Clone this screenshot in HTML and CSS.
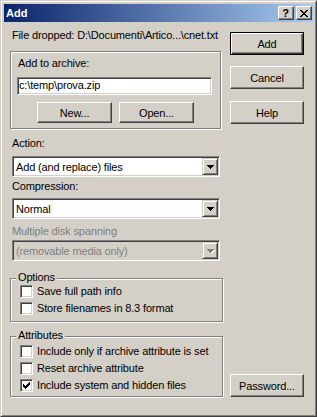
FILE: index.html
```html
<!DOCTYPE html>
<html lang="en">
<head>
    <meta charset="UTF-8">
    <title>Add</title>
    <link rel="stylesheet" href="styles.css">
</head>
<body>
    <div class="window">
        <div class="titlebar">
            <span class="title">Add</span>
            <div class="caption-buttons">
                <span class="cap-btn help">?</span>
                <span class="cap-btn close">
                    <svg width="8" height="7" viewBox="0 0 8 7" shape-rendering="crispEdges">
                        <path d="M0 0h2v1h-2zM6 0h2v1h-2zM1 1h2v1h-2zM5 1h2v1h-2zM2 2h4v1h-4zM3 3h2v1h-2zM2 4h4v1h-4zM1 5h2v1h-2zM5 5h2v1h-2zM0 6h2v1h-2zM6 6h2v1h-2z" fill="#000"/>
                    </svg>
                </span>
            </div>
        </div>

        <div class="client">
            <div class="left">
                <p class="dropped">File dropped: D:\Documenti\Artico...\cnet.txt</p>

                <div class="archive-box">
                    <p class="box-label">Add to archive:</p>
                    <div class="textbox">c:\temp\prova.zip</div>
                    <div class="archive-buttons">
                        <button class="btn">New...</button>
                        <button class="btn">Open...</button>
                    </div>
                </div>

                <p class="field-label action-label">Action:</p>
                <div class="combo">
                    <span class="combo-text">Add (and replace) files</span>
                    <span class="combo-arrow">
                        <svg width="7" height="4" viewBox="0 0 7 4" shape-rendering="crispEdges"><path d="M0 0h7v1h-7zM1 1h5v1h-5zM2 2h3v1h-3zM3 3h1v1h-1z" fill="#000"/></svg>
                    </span>
                </div>

                <p class="field-label">Compression:</p>
                <div class="combo">
                    <span class="combo-text">Normal</span>
                    <span class="combo-arrow">
                        <svg width="7" height="4" viewBox="0 0 7 4" shape-rendering="crispEdges"><path d="M0 0h7v1h-7zM1 1h5v1h-5zM2 2h3v1h-3zM3 3h1v1h-1z" fill="#000"/></svg>
                    </span>
                </div>

                <p class="field-label disabled span-label">Multiple disk spanning</p>
                <div class="combo combo-disabled">
                    <span class="combo-text">(removable media only)</span>
                    <span class="combo-arrow">
                        <svg width="8" height="5" viewBox="0 0 8 5" shape-rendering="crispEdges"><path d="M1 1h7v1h-7zM2 2h5v1h-5zM3 3h3v1h-3zM4 4h1v1h-1z" fill="#fff"/><path d="M0 0h7v1h-7zM1 1h5v1h-5zM2 2h3v1h-3zM3 3h1v1h-1z" fill="#808080"/></svg>
                    </span>
                </div>

                <div class="group options">
                    <span class="legend">Options</span>
                    <label class="check"><span class="box"></span>Save full path info</label>
                    <label class="check"><span class="box"></span>Store filenames in 8.3 format</label>
                </div>

                <div class="group attributes">
                    <span class="legend">Attributes</span>
                    <label class="check"><span class="box"></span>Include only if archive attribute is set</label>
                    <label class="check"><span class="box"></span>Reset archive attribute</label>
                    <label class="check"><span class="box">
                        <svg width="7" height="7" viewBox="0 0 7 7" shape-rendering="crispEdges"><path d="M6 0h1v3h-1zM5 1h1v3h-1zM4 2h1v3h-1zM3 3h1v3h-1zM2 4h1v3h-1zM1 3h1v3h-1zM0 2h1v3h-1z" fill="#000"/></svg>
                    </span>Include system and hidden files</label>
                </div>
            </div>

            <div class="right">
                <button class="btn side default">Add</button>
                <button class="btn side cancel">Cancel</button>
                <button class="btn side help-btn">Help</button>
                <button class="btn side password">Password...</button>
            </div>
        </div>
    </div>
</body>
</html>
```

FILE: styles.css
```css
* {
    box-sizing: border-box;
}

body {
    margin: 0;
    background: #d4d0c8;
    font-family: "Liberation Sans", Arial, sans-serif;
    font-size: 11px;
    letter-spacing: -0.15px;
    color: #000;
}

p {
    margin: 0;
    line-height: 13px;
}

.window {
    width: 317px;
    height: 417px;
    display: flex;
    flex-direction: column;
    padding: 3px;
    background: #d4d0c8;
    border: 1px solid;
    border-color: #d4d0c8 #404040 #404040 #d4d0c8;
    box-shadow: inset 1px 1px #fff, inset -1px -1px #808080;
}

/* title bar */
.titlebar {
    height: 18px;
    display: flex;
    align-items: center;
    padding-left: 2px;
    background: linear-gradient(to right, #0a246a, #a6caf0);
}

.title {
    color: #fff;
    font-weight: bold;
    font-size: 11px;
    letter-spacing: 0;
}

.caption-buttons {
    margin-left: auto;
    margin-right: 1px;
    display: flex;
    gap: 2px;
}

.cap-btn {
    width: 16px;
    height: 14px;
    display: flex;
    align-items: center;
    justify-content: center;
    background: #d4d0c8;
    border: 1px solid;
    border-color: #fff #404040 #404040 #fff;
    box-shadow: inset -1px -1px #808080;
}

.cap-btn.help {
    font-weight: bold;
    font-size: 11px;
    line-height: 12px;
    padding-right: 1px;
}

.cap-btn.close svg {
    margin-right: 1px;
}

/* client area */
.client {
    flex: 1;
    display: flex;
    gap: 7px;
    padding-left: 6px;
}

.left {
    width: 213px;
}

.dropped {
    margin-top: 7px;
    padding-left: 2px;
    white-space: nowrap;
}

.archive-box {
    width: 211px;
    height: 78px;
    margin-top: 9px;
    padding: 5px 0 0 7px;
    border: 1px solid #808080;
    box-shadow: inset 1px 1px #fff, 1px 1px #fff;
}

.textbox {
    width: 195px;
    height: 18px;
    margin: 7px 0 0 -1px;
    padding: 0 1px;
    line-height: 14px;
    background: #fff;
    border: 1px solid;
    border-color: #808080 #fff #fff #808080;
    box-shadow: inset 1px 1px #404040, inset -1px -1px #d4d0c8;
}

.archive-buttons {
    display: flex;
    gap: 7px;
    margin: 7px 0 0 19px;
}

.btn {
    width: 75px;
    height: 21px;
    padding: 0;
    font: inherit;
    letter-spacing: inherit;
    color: #000;
    background: #d4d0c8;
    border: 1px solid;
    border-color: #fff #404040 #404040 #fff;
    box-shadow: inset -1px -1px #808080;
}

.field-label {
    margin-top: 3px;
    padding-left: 2px;
}

.action-label {
    margin-top: 8px;
}

.span-label {
    margin-top: 6px;
}

.disabled {
    color: #808080;
}

/* combo boxes */
.combo {
    width: 208px;
    height: 21px;
    margin: 5px 0 0 2px;
    padding: 1px;
    display: flex;
    align-items: center;
    background: #fff;
    border: 1px solid;
    border-color: #808080 #fff #fff #808080;
    box-shadow: inset 1px 1px #404040, inset -1px -1px #d4d0c8;
}

.action-label + .combo {
    margin-top: 6px;
}

.span-label + .combo {
    margin-top: 2px;
}

.combo-text {
    flex: 1;
    padding-left: 2px;
}

.combo-arrow {
    width: 16px;
    height: 17px;
    display: flex;
    align-items: center;
    justify-content: center;
    background: #d4d0c8;
    border: 1px solid;
    border-color: #d4d0c8 #404040 #404040 #d4d0c8;
    box-shadow: inset 1px 1px #fff, inset -1px -1px #808080;
}

.combo-disabled {
    background: #d4d0c8;
    color: #808080;
}

.combo-disabled .combo-arrow svg {
    margin: 1px 0 0 1px;
}

/* group boxes */
.group {
    position: relative;
    width: 213px;
    display: flex;
    flex-direction: column;
    gap: 4px;
    padding-left: 9px;
    border: 1px solid #808080;
    box-shadow: inset 1px 1px #fff, 1px 1px #fff;
}

.options {
    height: 44px;
    margin-top: 17px;
    padding-top: 6px;
}

.attributes {
    height: 61px;
    margin-top: 14px;
    padding-top: 8px;
}

.legend {
    position: absolute;
    top: -8px;
    left: 5px;
    padding: 0 2px;
    line-height: 13px;
    background: #d4d0c8;
}

.check {
    display: flex;
    align-items: center;
    gap: 4px;
    height: 13px;
    line-height: 13px;
}

.box {
    width: 13px;
    height: 13px;
    display: flex;
    align-items: center;
    justify-content: center;
    background: #fff;
    border: 1px solid;
    border-color: #808080 #fff #fff #808080;
    box-shadow: inset 1px 1px #404040, inset -1px -1px #d4d0c8;
}

/* right column buttons */
.right {
    width: 74px;
    display: flex;
    flex-direction: column;
    padding: 10px 0 16px;
}

.btn.side {
    width: 74px;
    height: 23px;
}

.btn.default {
    border: 1px solid #000;
    box-shadow: inset 1px 1px #fff, inset -1px -1px #404040, inset -2px -2px #808080;
}

.cancel {
    margin-top: 11px;
}

.help-btn {
    margin-top: 12px;
}

.password {
    margin-top: auto;
}
```
